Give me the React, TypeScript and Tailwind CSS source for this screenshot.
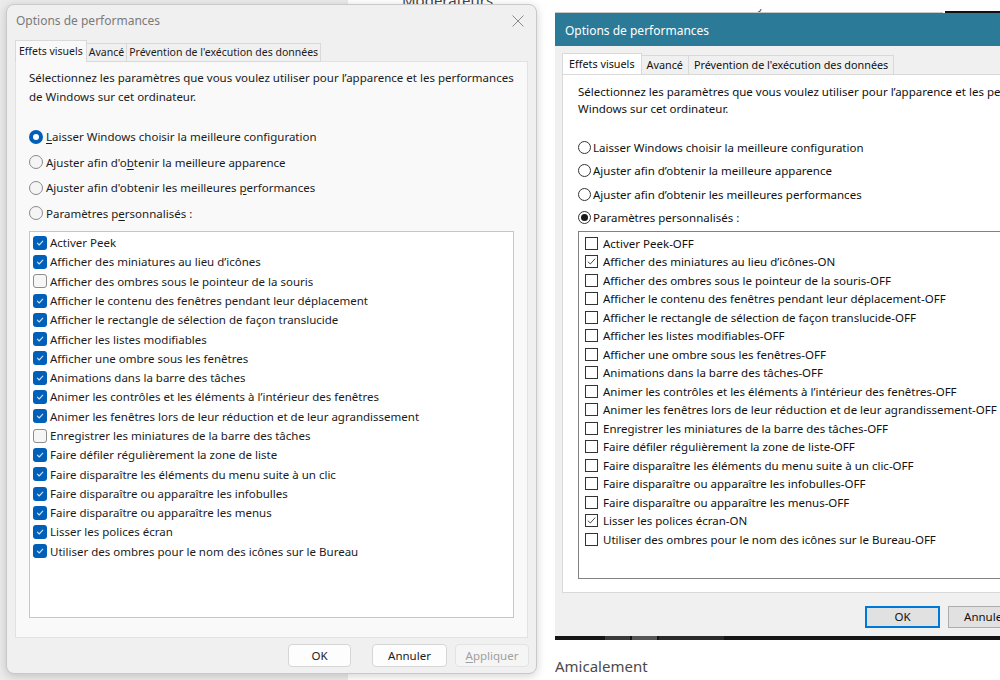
import React from "react";

const UI = "font-['Noto_Sans',sans-serif]";

const effects: string[] = [
  "Activer Peek",
  "Afficher des miniatures au lieu d’icônes",
  "Afficher des ombres sous le pointeur de la souris",
  "Afficher le contenu des fenêtres pendant leur déplacement",
  "Afficher le rectangle de sélection de façon translucide",
  "Afficher les listes modifiables",
  "Afficher une ombre sous les fenêtres",
  "Animations dans la barre des tâches",
  "Animer les contrôles et les éléments à l’intérieur des fenêtres",
  "Animer les fenêtres lors de leur réduction et de leur agrandissement",
  "Enregistrer les miniatures de la barre des tâches",
  "Faire défiler régulièrement la zone de liste",
  "Faire disparaître les éléments du menu suite à un clic",
  "Faire disparaître ou apparaître les infobulles",
  "Faire disparaître ou apparaître les menus",
  "Lisser les polices écran",
  "Utiliser des ombres pour le nom des icônes sur le Bureau",
];

const modernOn = [true, true, false, true, true, true, true, true, true, true, false, true, true, true, true, true, true];
const classicOn = [false, true, false, false, false, false, false, false, false, false, false, false, false, false, false, true, false];

function ModernCheck({ on }: { on: boolean }) {
  if (!on) {
    return <span className="w-[14px] h-[14px] rounded-[3px] border border-[#8c8c8c] bg-[#f6f6f6] shrink-0" />;
  }
  return (
    <span className="w-[14px] h-[14px] rounded-[3px] bg-[#005fb8] shrink-0 flex items-center justify-center">
      <svg width="10" height="10" viewBox="0 0 10 10">
        <path d="M2.4 5.2 L4.2 7 L7.8 3.2" fill="none" stroke="#cfe0f3" strokeWidth="1.1" strokeLinecap="round" strokeLinejoin="round" />
      </svg>
    </span>
  );
}

function ClassicCheck({ on }: { on: boolean }) {
  return (
    <span className="w-[13px] h-[13px] border border-[#333333] bg-white shrink-0 flex items-center justify-center">
      {on && (
        <svg width="11" height="11" viewBox="0 0 11 11">
          <path d="M1.8 5.6 L4.3 8 L9.2 2.6" fill="none" stroke="#4a4a4a" strokeWidth="1" />
        </svg>
      )}
    </span>
  );
}

function ModernRadio({ on, children }: { on: boolean; children: React.ReactNode }) {
  return (
    <div className="flex items-center h-[25.5px] gap-[3px]">
      {on ? (
        <span className="w-[14px] h-[14px] rounded-full bg-[#005fb8] flex items-center justify-center shrink-0">
          <span className="w-[6px] h-[6px] rounded-full bg-white" />
        </span>
      ) : (
        <span className="w-[14px] h-[14px] rounded-full border border-[#8a8a8a] bg-[#f5f5f5] shrink-0" />
      )}
      <span>{children}</span>
    </div>
  );
}

function ClassicRadio({ on, children }: { on: boolean; children: React.ReactNode }) {
  return (
    <div className="flex items-center h-[23.3px] gap-[2px]">
      <span className="w-[13px] h-[13px] rounded-full border border-[#333333] bg-white flex items-center justify-center shrink-0">
        {on && <span className="w-[7px] h-[7px] rounded-full bg-[#1a1a1a]" />}
      </span>
      <span>{children}</span>
    </div>
  );
}

function ModernDialog() {
  return (
    <div className="ml-[6px] w-[531px] h-[670px] rounded-[8px] border border-[#c9c9c9] bg-[#f0f0f0] shadow-[0_2px_10px_rgba(0,0,0,0.18)] flex flex-col text-[11.5px] text-[#1b1b1b]">
      {/* title bar */}
      <div className="h-[31px] flex items-center justify-between pl-[9px] pr-[12px]">
        <span className="text-[12px] text-[#7a7a7a]">Options de performances</span>
        <svg width="12" height="12" viewBox="0 0 12 12">
          <path d="M0.5 0.5 L11.5 11.5 M11.5 0.5 L0.5 11.5" stroke="#8a8a8a" strokeWidth="1" />
        </svg>
      </div>

      {/* tabs */}
      <div className="mt-[4px] px-[8px] flex items-end h-[22px] relative z-10 text-[10.5px]">
        <div className="h-[22px] px-[3px] flex items-center bg-[#f9f9f9] border border-b-0 border-[#d9d9d9]">Effets visuels</div>
        <div className="h-[19px] px-[2px] flex items-center bg-[#f0f0f0] border border-l-0 border-[#d9d9d9]">Avancé</div>
        <div className="h-[19px] px-[2px] flex items-center bg-[#f0f0f0] border border-l-0 border-[#d9d9d9]">Prévention de l'exécution des données</div>
      </div>

      {/* tab page */}
      <div className="mx-[8px] -mt-px h-[577px] bg-[#f9f9f9] border border-[#e2e2e2] pt-[6px] px-[13px]">
        <p className="leading-[19px] whitespace-nowrap">
          Sélectionnez les paramètres que vous voulez utiliser pour l’apparence et les performances
          <br />
          de Windows sur cet ordinateur.
        </p>
        <div className="mt-[18px] flex flex-col">
          <ModernRadio on>
            <span className="underline underline-offset-2">L</span>aisser Windows choisir la meilleure configuration
          </ModernRadio>
          <ModernRadio on={false}>
            Ajuster afin d'o<span className="underline underline-offset-2">b</span>tenir la meilleure apparence
          </ModernRadio>
          <ModernRadio on={false}>
            Ajuster afin d'obtenir les meilleures <span className="underline underline-offset-2">p</span>erformances
          </ModernRadio>
          <ModernRadio on={false}>
            Paramètres p<span className="underline underline-offset-2">e</span>rsonnalisés :
          </ModernRadio>
        </div>
        <div className="mt-[5px] h-[387px] bg-white border border-[#c6c6c6] pt-[1px] pl-[3px]">
          {effects.map((label, i) => (
            <div key={label} className="h-[19.3px] flex items-center gap-[3px]">
              <ModernCheck on={modernOn[i]} />
              <span className="whitespace-nowrap">{label}</span>
            </div>
          ))}
        </div>
      </div>

      {/* buttons */}
      <div className="flex-1 flex items-center justify-end gap-[8px] pr-[7px]">
        <button className="w-[63px] h-[23px] rounded-[4px] bg-[#fdfdfd] border border-[#d6d6d6] text-[#1b1b1b]">OK</button>
        <button className="ml-[13px] w-[75px] h-[23px] rounded-[4px] bg-[#fdfdfd] border border-[#d6d6d6] text-[#1b1b1b]">Annuler</button>
        <button className="w-[74px] h-[23px] rounded-[4px] bg-[#f5f5f5] border border-[#e3e3e3] text-[#a0a0a0]">
          <span className="underline underline-offset-2">A</span>ppliquer
        </button>
      </div>
    </div>
  );
}

function ClassicDialog() {
  return (
    <div className="w-[540px] shrink-0 h-[627px] bg-[#f0f0f0] flex flex-col text-[11.5px] text-[#111111]">
      <div className="h-[33px] bg-[#2b7a98] flex items-center pl-[10px] pt-[3px]">
        <span className="text-[12px] text-white">Options de performances</span>
      </div>

      <div className="mt-[7px] px-[7px] flex items-end h-[21px] relative z-10 text-[10.8px]">
        <div className="h-[21px] px-[6px] flex items-center bg-white border border-b-0 border-[#d9d9d9]">Effets visuels</div>
        <div className="h-[19px] px-[5px] flex items-center bg-[#f0f0f0] border border-l-0 border-b-0 border-[#d9d9d9]">Avancé</div>
        <div className="h-[19px] px-[5px] flex items-center bg-[#f0f0f0] border border-l-0 border-b-0 border-[#d9d9d9]">Prévention de l'exécution des données</div>
      </div>

      <div className="mx-[7px] h-[519px] bg-white border border-[#d9d9d9] pt-[8px] px-[15px]">
        <p className="leading-[17px] whitespace-nowrap">
          Sélectionnez les paramètres que vous voulez utiliser pour l’apparence et les performances de
          <br />
          Windows sur cet ordinateur.
        </p>
        <div className="mt-[19px] flex flex-col">
          <ClassicRadio on={false}>Laisser Windows choisir la meilleure configuration</ClassicRadio>
          <ClassicRadio on={false}>Ajuster afin d’obtenir la meilleure apparence</ClassicRadio>
          <ClassicRadio on={false}>Ajuster afin d’obtenir les meilleures performances</ClassicRadio>
          <ClassicRadio on>Paramètres personnalisés :</ClassicRadio>
        </div>
        <div className="mt-[2px] h-[348px] bg-white border border-[#828282] pt-[2px] pl-[6px]">
          {effects.map((label, i) => (
            <div key={label} className="h-[18.5px] flex items-center gap-[5px]">
              <ClassicCheck on={classicOn[i]} />
              <span className="whitespace-nowrap">
                {label}-{classicOn[i] ? "ON" : "OFF"}
              </span>
            </div>
          ))}
        </div>
      </div>

      <div className="flex-1 flex items-start gap-[8px] pl-[310px] pt-[13px]">
        <button className="w-[75px] h-[22px] bg-[#e1e1e1] border-2 border-[#0078d7]">OK</button>
        <button className="w-[75px] h-[22px] bg-[#e1e1e1] border border-[#adadad]">Annuler</button>
      </div>

      {/* lower window edge */}
      <div className="h-[4px] bg-[#151515] flex">
        <span className="ml-[50px] w-[25px] bg-[#3a3a3a]" />
        <span className="ml-[2px] w-[25px] bg-[#555555]" />
        <span className="ml-[2px] w-[65px] bg-[#2a2a2a]" />
      </div>
    </div>
  );
}

export default function App() {
  return (
    <div className={`${UI} w-[1000px] h-[680px] overflow-hidden flex bg-[linear-gradient(to_right,#ebebeb_348px,#ffffff_348px)]`}>
      {/* left column */}
      <div className="w-[555px] shrink-0 flex flex-col">
        <div className="h-[4px] overflow-hidden">
          <div className="ml-[402px] -mt-[9px] text-[15px] text-[#444444] leading-[18px]">Modérateurs</div>
        </div>
        <ModernDialog />
      </div>

      {/* right column */}
      <div className="flex-1 overflow-hidden flex flex-col">
        <div className="h-[13px] flex flex-col">
          <div className="h-[9px]" />
          <div className="h-[4px] flex">
            <div className="w-[390px] h-[4px] overflow-hidden border-b border-[#c8c8c8] flex">
              <span className="ml-[125px] -mt-[11px] leading-[14px] text-[11px] text-[#444444]">Protection du système</span>
              <span className="ml-[14px] -mt-[11px] leading-[14px] text-[11px] text-[#444444]">Utilisation à distance</span>
            </div>
            <div className="ml-[2px] mt-[2px] w-[55px] h-[2px] bg-[#111111]" />
          </div>
        </div>
        <ClassicDialog />
        <div className="pt-[15px] text-[15px] text-[#4a4a4a]">Amicalement</div>
      </div>
    </div>
  );
}
